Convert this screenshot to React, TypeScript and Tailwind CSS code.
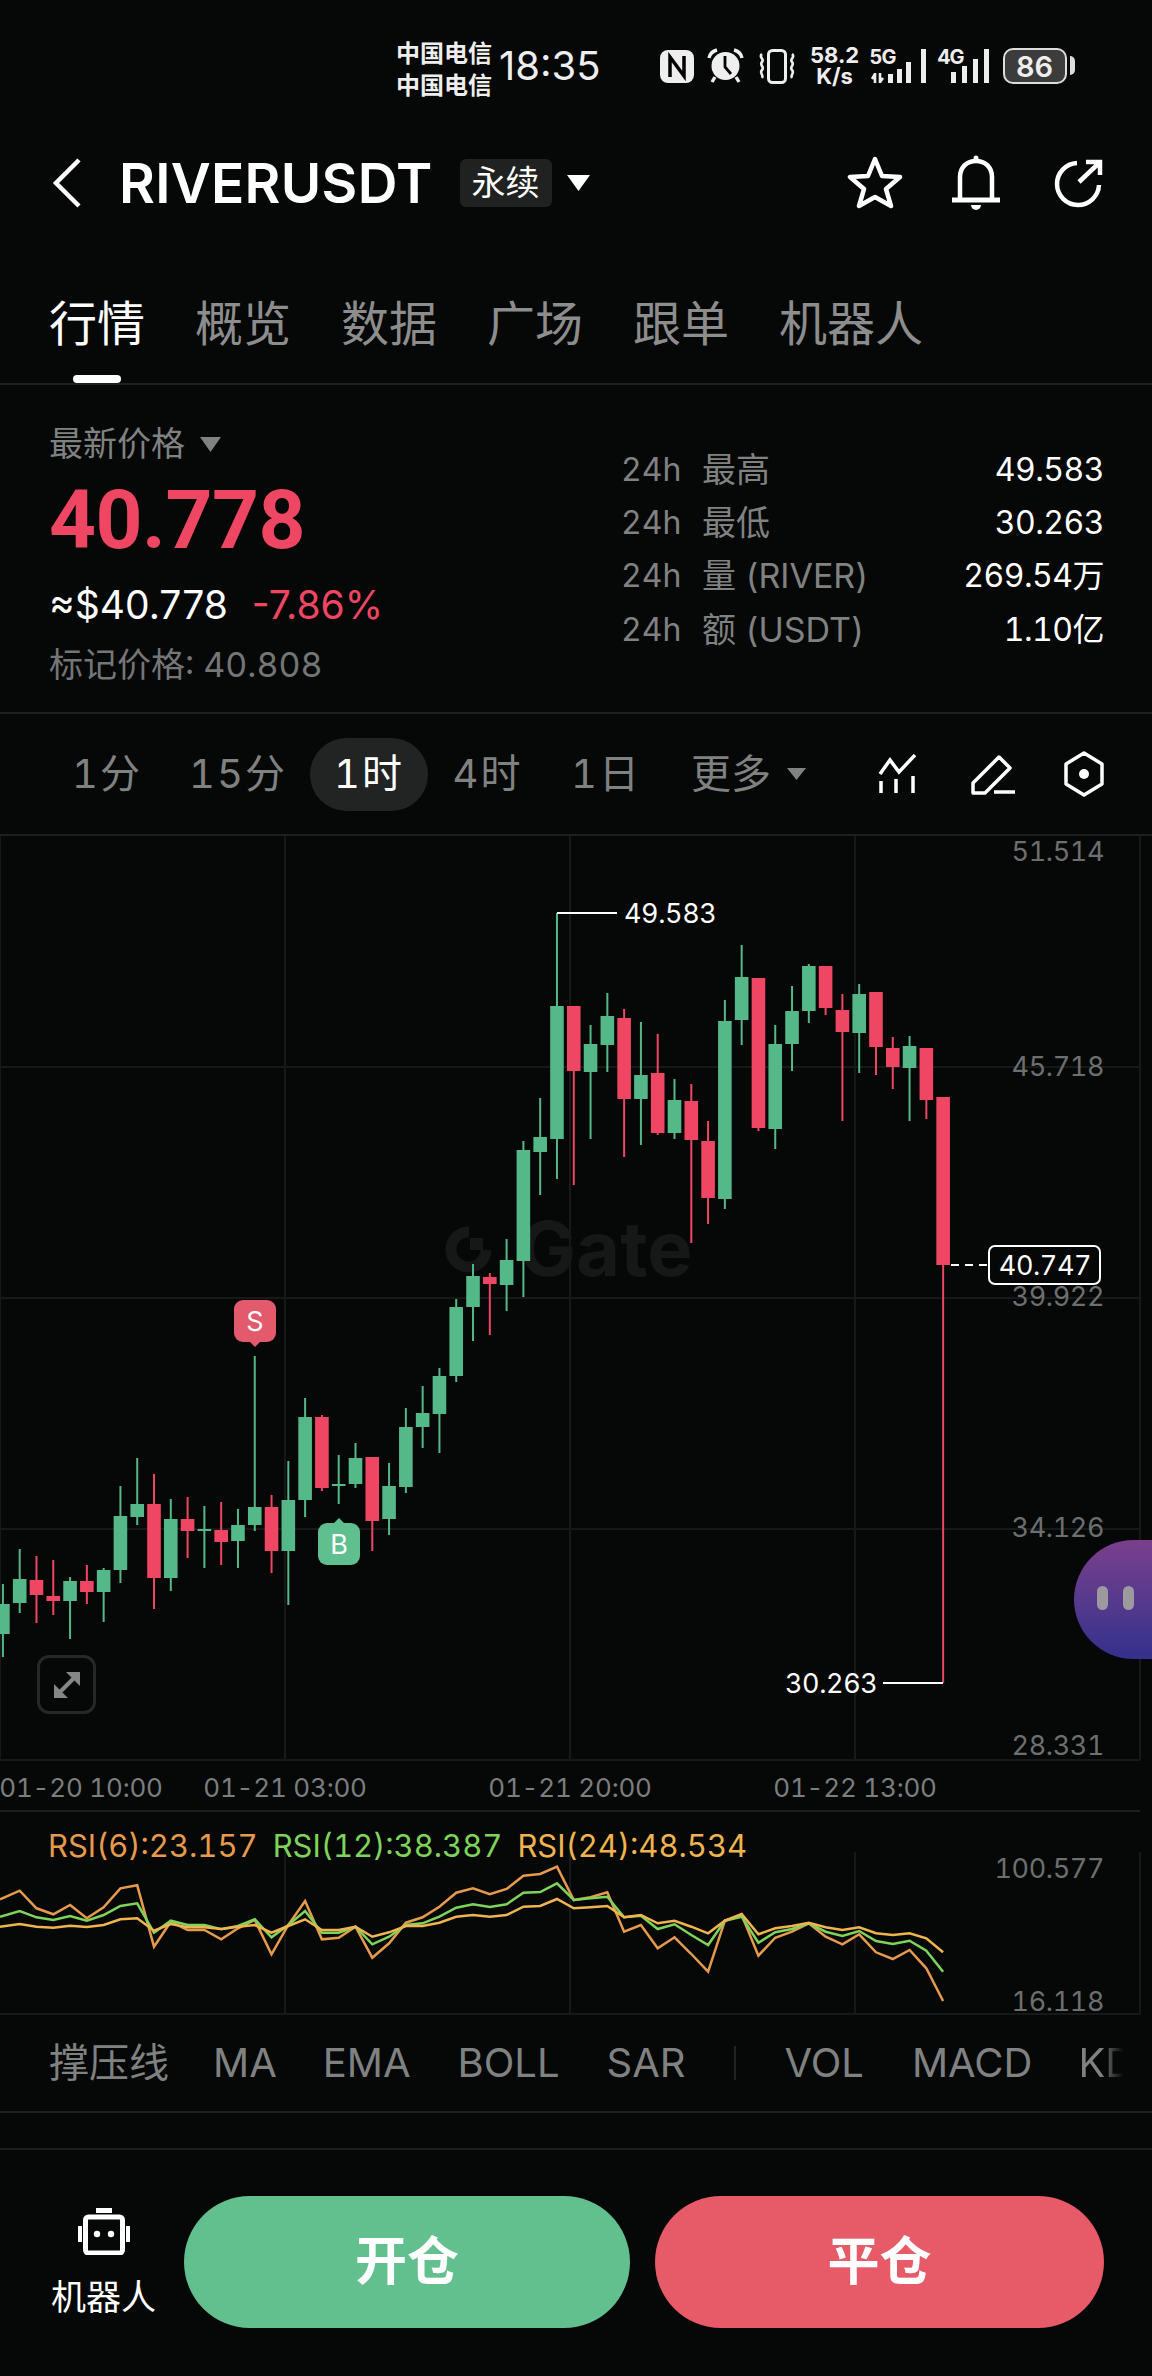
import React from 'react';

type Candle = [number, number, number, number, 'g' | 'r'];

const UP = '#55b888';
const DOWN = '#ee4663';

// wick top, wick bottom, body top, body bottom, direction
const candles: Candle[] = [
  [1584, 1657, 1604, 1634, 'g'], [1549, 1613, 1579, 1603, 'g'], [1556, 1623, 1580, 1595, 'r'],
  [1560, 1615, 1596, 1601, 'r'], [1577, 1639, 1581, 1601, 'g'], [1565, 1604, 1581, 1592, 'r'],
  [1568, 1622, 1570, 1592, 'g'], [1486, 1583, 1516, 1570, 'g'], [1458, 1525, 1504, 1517, 'g'],
  [1474, 1609, 1504, 1578, 'r'], [1499, 1591, 1519, 1578, 'g'], [1497, 1558, 1519, 1531, 'r'],
  [1506, 1568, 1529, 1531, 'g'], [1502, 1565, 1530, 1542, 'r'], [1509, 1568, 1525, 1541, 'g'],
  [1356, 1531, 1507, 1525, 'g'], [1495, 1573, 1507, 1551, 'r'], [1461, 1605, 1500, 1551, 'g'],
  [1398, 1517, 1417, 1500, 'g'], [1415, 1491, 1417, 1488, 'r'], [1455, 1504, 1484, 1486, 'g'],
  [1443, 1488, 1458, 1484, 'g'], [1457, 1551, 1457, 1521, 'r'], [1463, 1535, 1486, 1519, 'g'],
  [1408, 1493, 1427, 1487, 'g'], [1386, 1448, 1413, 1427, 'g'], [1368, 1453, 1376, 1414, 'g'],
  [1299, 1382, 1307, 1376, 'g'], [1264, 1341, 1276, 1307, 'g'], [1273, 1335, 1277, 1284, 'r'],
  [1239, 1311, 1260, 1285, 'g'], [1141, 1297, 1150, 1261, 'g'], [1098, 1195, 1137, 1152, 'g'],
  [913, 1179, 1006, 1139, 'g'], [1006, 1185, 1006, 1071, 'r'], [1025, 1139, 1044, 1072, 'g'],
  [993, 1072, 1016, 1045, 'g'], [1009, 1157, 1018, 1099, 'r'], [1022, 1145, 1075, 1099, 'g'],
  [1034, 1135, 1073, 1133, 'r'], [1079, 1139, 1100, 1133, 'g'], [1084, 1243, 1101, 1140, 'r'],
  [1121, 1224, 1141, 1198, 'r'], [1000, 1209, 1021, 1199, 'g'], [945, 1045, 977, 1020, 'g'],
  [978, 1131, 978, 1128, 'r'], [1025, 1149, 1044, 1129, 'g'], [986, 1071, 1011, 1044, 'g'],
  [964, 1023, 966, 1011, 'g'], [966, 1015, 966, 1008, 'r'], [994, 1121, 1010, 1032, 'r'],
  [984, 1073, 994, 1033, 'g'], [992, 1075, 992, 1047, 'r'], [1037, 1089, 1048, 1067, 'r'],
  [1036, 1121, 1046, 1068, 'g'], [1048, 1119, 1048, 1100, 'r'], [1097, 1683, 1097, 1265, 'r'],
];

const candleX = (i: number) => 2.9 + i * 16.79;

// RSI readings in plot units, one per candle
const rsi6 = [298, 272, 325, 343, 315, 355, 322, 265, 256, 440, 365, 390, 390, 418, 385, 360, 463, 375, 303, 418, 413, 380, 473, 430, 368, 352, 320, 278, 265, 283, 267, 227, 222, 200, 300, 292, 277, 395, 375, 445, 412, 462, 515, 362, 345, 467, 413, 395, 370, 410, 433, 403, 457, 477, 450, 505, 603];
const rsi12 = [350, 333, 352, 360, 348, 362, 345, 318, 310, 398, 362, 375, 375, 388, 378, 358, 412, 375, 333, 398, 398, 380, 433, 410, 375, 370, 350, 323, 313, 321, 313, 278, 276, 250, 300, 295, 290, 352, 347, 387, 373, 405, 435, 362, 350, 428, 397, 387, 370, 395, 408, 393, 423, 432, 422, 452, 515];
const rsi24 = [380, 372, 380, 383, 377, 381, 375, 358, 355, 392, 372, 382, 382, 387, 380, 375, 398, 378, 358, 390, 390, 380, 410, 397, 378, 378, 368, 350, 345, 350, 345, 320, 318, 297, 325, 322, 318, 352, 345, 370, 362, 380, 400, 362, 342, 403, 385, 378, 368, 382, 390, 382, 400, 405, 400, 415, 457];

const rsiPoints = (values: number[]) =>
  values.map((v, i) => `${i === 0 ? 0 : candleX(i).toFixed(1)},${(1800 + v / 3).toFixed(1)}`).join(' ');

const Triangle: React.FC<{ className: string; color: string }> = ({ className, color }) => (
  <svg className={className} viewBox="0 0 20 16" preserveAspectRatio="none">
    <polygon points="0,0 20,0 10,16" fill={color} />
  </svg>
);

const StatusBar = () => (
  <div className="h-[130px] flex items-start pl-[396px] pt-[38px] text-[#eeeeee]">
    <div className="w-[96px] text-[24px] font-bold leading-[32px]">
      <div>中国电信</div>
      <div>中国电信</div>
    </div>
    <div className="ml-[7px] mt-[6px] text-[40px] leading-[44px] font-normal normal-nums">18:35</div>
    <svg className="ml-[59px] mt-[12px]" width="34" height="33" viewBox="0 0 34 33">
      <rect x="0" y="0" width="34" height="33" rx="8" fill="#eeeeee" />
      <path d="M10 27V7l14 19V6" stroke="#000" strokeWidth="3.5" fill="none" />
    </svg>
    <svg className="ml-[13px] mt-[10px]" width="37" height="35" viewBox="0 0 37 35">
      <circle cx="18.5" cy="18" r="14" fill="#eeeeee" />
      <path d="M18 8v11l6 7" stroke="#000" strokeWidth="2.8" fill="none" />
      <path d="M2 10c1-5 4-7 8-8M35 10c-1-5-4-7-8-8M8 29l-3 5M29 29l3 5" stroke="#eeeeee" strokeWidth="3.4" fill="none" />
    </svg>
    <svg className="ml-[13px] mt-[11px]" width="40" height="35" viewBox="0 0 40 35">
      <rect x="11.5" y="1.5" width="17" height="32" rx="4" stroke="#eeeeee" strokeWidth="3" fill="none" />
      <path d="M5 5c-4 3 3 5 0 8s3 5 0 8 2 5 0 8M35 5c4 3-3 5 0 8s-3 5 0 8-2 5 0 8" stroke="#eeeeee" strokeWidth="2.6" fill="none" />
    </svg>
    <div className="ml-[12px] mt-[7px] w-[52px] text-center text-[22px] font-bold leading-[21px] normal-nums">
      <div>58.2</div>
      <div>K/s</div>
    </div>
    <div className="relative ml-[9px] mt-[10px] w-[56px] h-[36px]">
      <span className="absolute left-0 -top-[1px] text-[20px] font-bold leading-[20px] tracking-[-1px]">5G</span>
      <svg className="absolute left-0 top-0" width="56" height="36" viewBox="0 0 56 36">
        <path d="M5 25v10M2 31l3-5M10 25v10M13 30l-3 4" stroke="#eeeeee" strokeWidth="2.6" fill="none" />
        <rect x="18" y="26" width="5" height="9" fill="#eeeeee" />
        <rect x="27" y="21" width="5" height="14" fill="#eeeeee" />
        <rect x="36" y="14" width="5" height="21" fill="#eeeeee" />
        <rect x="51" y="1" width="5" height="34" fill="#eeeeee" />
      </svg>
    </div>
    <div className="relative ml-[12px] mt-[10px] w-[52px] h-[36px]">
      <span className="absolute left-0 -top-[1px] text-[20px] font-bold leading-[20px] tracking-[-1px]">4G</span>
      <svg className="absolute left-0 top-0" width="52" height="36" viewBox="0 0 52 36">
        <rect x="13" y="24" width="5" height="11" fill="#eeeeee" />
        <rect x="24" y="18" width="5" height="17" fill="#eeeeee" />
        <rect x="35" y="11" width="5" height="24" fill="#eeeeee" />
        <rect x="46" y="1" width="5" height="34" fill="#eeeeee" />
      </svg>
    </div>
    <div className="ml-[13px] mt-[10px] w-[64px] h-[36px] rounded-[10px] border-2 border-[#dddddd] bg-[#3c3c3c] flex items-center justify-center text-[29px] font-semibold leading-none normal-nums">
      86
    </div>
    <div className="ml-[3px] mt-[18px] w-[5px] h-[19px] rounded-r-full bg-[#dddddd]" />
  </div>
);

const Header = () => (
  <div className="h-[106px] flex items-center text-white">
    <svg className="ml-[52px]" width="30" height="50" viewBox="0 0 30 50">
      <path d="M27 2 4 25l23 23" stroke="#fff" strokeWidth="4.5" fill="none" />
    </svg>
    <h1 className="ml-[37px] text-[55px] font-semibold leading-none tracking-[0.3px]">RIVERUSDT</h1>
    <span className="ml-[27px] w-[92px] h-[48px] rounded-[6px] bg-[#202121] flex items-center justify-center text-[34px] leading-none">永续</span>
    <Triangle className="ml-[15px] w-[23px] h-[16px]" color="#ffffff" />
    <div className="flex-1" />
    <svg width="56" height="54" viewBox="0 0 56 54">
      <polygon points="28,3 35,20 53,21 39,33 44,50 28,41 12,50 17,33 3,21 21,20" stroke="#fff" strokeWidth="4.5" strokeLinejoin="round" fill="none" />
    </svg>
    <svg className="ml-[48px]" width="50" height="56" viewBox="0 0 50 56">
      <path d="M9 44V22C9 12 16 6 25 6s16 6 16 16v22" stroke="#fff" strokeWidth="4.5" fill="none" />
      <path d="M1 45h48" stroke="#fff" strokeWidth="5" />
      <circle cx="25" cy="3" r="2.5" fill="#fff" />
      <path d="M20 50h10a5 5 0 0 1-10 0z" fill="#fff" />
    </svg>
    <svg className="ml-[52px] mr-[49px]" width="50" height="50" viewBox="0 0 50 50">
      <path d="M24 5A21 21 0 1 0 46 27" stroke="#fff" strokeWidth="4.5" fill="none" />
      <path d="M26 24 46 5M33 4h14v13" stroke="#fff" strokeWidth="4.5" fill="none" />
    </svg>
  </div>
);

const Tabs = () => {
  const items = ['行情', '概览', '数据', '广场', '跟单', '机器人'];
  return (
    <div className="relative h-[149px] border-b-2 border-[#1e1f1f] pl-[49px] pt-[60px] flex items-start gap-[50px] text-[48px] leading-[56px] text-[#8d8d8d]">
      {items.map((name, i) => (
        <span key={name} className={i === 0 ? 'text-white' : ''}>{name}</span>
      ))}
      <span className="absolute left-[73px] bottom-0 w-[48px] h-[8px] rounded-[4px] bg-white" />
    </div>
  );
};

const StatRow: React.FC<{ label: string; value: string }> = ({ label, value }) => (
  <div className="h-[53.4px] flex items-center text-[34px] leading-none">
    <span className="w-[81px] text-[32px] text-[#808282]">24h</span>
    <span className="text-[#808282]">{label}</span>
    <span className="ml-auto text-[32px] tracking-[-0.5px] text-white">{value}</span>
  </div>
);

const PriceSummary = () => (
  <div className="h-[329px] border-b-2 border-[#1e1f1f] flex">
    <div className="pl-[49px] w-[621px]">
      <div className="mt-[39px] h-[40px] flex items-center text-[34px] leading-none text-[#808282]">
        最新价格
        <Triangle className="ml-[15px] w-[21px] h-[15px]" color="#808282" />
      </div>
      <div className="mt-[16px] h-[80px] flex items-center font-['Roboto',sans-serif] text-[82px] font-bold leading-none tracking-[-0.5px] text-[#ee4663]">40.778</div>
      <div className="mt-[22px] h-[44px] flex items-center text-[39px] leading-none normal-nums">
        <span className="text-white">≈$40.778</span>
        <span className="ml-[24px] text-[#ee4663]">-7.86%</span>
      </div>
      <div className="mt-[19px] h-[40px] flex items-center text-[34px] leading-none text-[#747676]">标记价格: 40.808</div>
    </div>
    <div className="w-[483px] pt-[58px]">
      <StatRow label="最高" value="49.583" />
      <StatRow label="最低" value="30.263" />
      <StatRow label="量 (RIVER)" value="269.54万" />
      <StatRow label="额 (USDT)" value="1.10亿" />
    </div>
  </div>
);

const TimeframeBar = () => {
  const frames = [
    { name: '1分', width: 'w-[118px]' },
    { name: '15分', width: 'w-[144px]' },
    { name: '1时', width: 'w-[118px]' },
    { name: '4时', width: 'w-[119px]' },
    { name: '1日', width: 'w-[118px]' },
  ];
  return (
    <div className="h-[122px] border-b-2 border-[#1e1f1f] flex items-center pl-[48px] text-[40px] leading-none tracking-[2px] text-[#808282]">
      {frames.map(f => (
        <span
          key={f.name}
          className={`${f.width} h-[73px] flex items-center justify-center rounded-full ${f.name === '1时' ? 'bg-[#222323] text-white' : ''}`}
        >
          {f.name}
        </span>
      ))}
      <span className="ml-[26px] tracking-normal">更多</span>
      <Triangle className="ml-[16px] w-[19px] h-[12px]" color="#808282" />
      <svg className="ml-[72px]" width="40" height="40" viewBox="0 0 40 40">
        <path d="M2 20 12 6l9 12L37 1" stroke="#fff" strokeWidth="3.5" fill="none" />
        <path d="M3 27v12M18 25v14M35 22v17" stroke="#fff" strokeWidth="3.5" />
      </svg>
      <svg className="ml-[52px]" width="46" height="42" viewBox="0 0 46 42">
        <path d="M3 40V30L29 4l11 11-25 25z" stroke="#fff" strokeWidth="3.5" strokeLinejoin="round" fill="none" />
        <path d="M24 39h21" stroke="#fff" strokeWidth="3.5" />
      </svg>
      <svg className="ml-[47px]" width="42" height="46" viewBox="0 0 42 46">
        <polygon points="21,2 39,13 39,33 21,44 3,33 3,13" stroke="#fff" strokeWidth="3.5" strokeLinejoin="round" fill="none" />
        <circle cx="21" cy="23" r="5" fill="#fff" />
      </svg>
    </div>
  );
};

const GRID = '#171919';
const AXIS = '#6d6f6f';

const CandleChart = () => (
  <div className="relative h-[974px]">
    <svg className="block" width="1152" height="974" viewBox="0 836 1152 974">
      {[0, 285, 570, 855, 1140].map(x => (
        <line key={x} x1={x} x2={x} y1={836} y2={1760} stroke={GRID} strokeWidth="2" />
      ))}
      {[1067, 1298, 1529, 1760].map(y => (
        <line key={y} x1={0} x2={1140} y1={y} y2={y} stroke={GRID} strokeWidth="2" />
      ))}

      {/* exchange watermark */}
      <path d="M469 1232A17.5 17.5 0 1 0 486 1250" stroke="#161717" strokeWidth="11" fill="none" />
      <rect x="470" y="1238" width="13" height="12" fill="#161717" />
      <text x="519" y="1276" fontSize="76" fontWeight="700" fill="#161717">Gate</text>

      {candles.map(([wt, wb, bt, bb, dir], i) => {
        const fill = dir === 'g' ? UP : DOWN;
        const x = candleX(i);
        return (
          <g key={i} fill={fill}>
            <rect x={x - 1} y={wt} width="2" height={wb - wt} />
            <rect x={x - 6.8} y={bt} width="13.6" height={bb - bt} />
          </g>
        );
      })}

      {/* high / low callouts */}
      <path d="M557 913H617" stroke="#fff" strokeWidth="2" />
      <text x="624" y="923" fontSize="27" letterSpacing="-0.4" fill="#fff">49.583</text>
      <path d="M883 1683H943" stroke="#fff" strokeWidth="2" />
      <text x="785" y="1693" fontSize="27" letterSpacing="-0.4" fill="#fff">30.263</text>

      <g fontSize="27" letterSpacing="-0.4" fill={AXIS} textAnchor="end">
        <text x="1104" y="861">51.514</text>
        <text x="1104" y="1076">45.718</text>
        <text x="1104" y="1306">39.922</text>
        <text x="1104" y="1537">34.126</text>
        <text x="1104" y="1755">28.331</text>
      </g>
      <g fontSize="26" letterSpacing="-0.2" fill="#7c7e7e" textAnchor="middle">
        <text x="81" y="1797">01-20 10:00</text>
        <text x="285" y="1797">01-21 03:00</text>
        <text x="570" y="1797">01-21 20:00</text>
        <text x="855" y="1797">01-22 13:00</text>
      </g>

      {/* last price tag */}
      <path d="M951 1265H988" stroke="#fff" strokeWidth="2" strokeDasharray="8 6" />
      <rect x="989" y="1246" width="111" height="38" rx="6" fill="#060707" stroke="#fff" strokeWidth="2" />
      <text x="1045" y="1275" fontSize="27" letterSpacing="-0.4" fill="#fff" textAnchor="middle">40.747</text>
    </svg>

    <div className="absolute left-[234px] top-[464px] w-[42px] h-[42px] rounded-[9px] bg-[#e25a6c] flex items-center justify-center text-[27px] leading-none text-white">
      S
      <span className="absolute left-[16px] -bottom-[5px] w-0 h-0 border-x-[5px] border-x-transparent border-t-[5px] border-t-[#e25a6c]" />
    </div>
    <div className="absolute left-[318px] top-[687px] w-[42px] h-[42px] rounded-[9px] bg-[#5fbf8e] flex items-center justify-center text-[27px] leading-none text-white">
      B
      <span className="absolute left-[16px] -top-[5px] w-0 h-0 border-x-[5px] border-x-transparent border-b-[5px] border-b-[#5fbf8e]" />
    </div>

    <div className="absolute left-[37px] top-[819px] w-[59px] h-[59px] rounded-[12px] border-[3px] border-[#262727] flex items-center justify-center">
      <svg width="30" height="30" viewBox="0 0 30 30">
        <path d="M14 2h14v14z M16 28H2V14z" fill="#858787" />
        <path d="M22 8 8 22" stroke="#858787" strokeWidth="4" />
      </svg>
    </div>

    <div className="absolute right-0 top-[704px] w-[78px] h-[119px] rounded-l-[60px] bg-gradient-to-b from-[#7a3f8c] to-[#33308c]">
      <span className="absolute left-[23px] top-[46px] w-[11px] h-[24px] rounded-full bg-[#9c9a9e]" />
      <span className="absolute left-[49px] top-[46px] w-[11px] h-[24px] rounded-full bg-[#9c9a9e]" />
    </div>
  </div>
);

const RsiPanel = () => (
  <div className="relative h-[205px]">
    <svg className="block" width="1152" height="205" viewBox="0 1810 1152 205">
      <line x1={0} x2={1140} y1={1811} y2={1811} stroke="#1e1f1f" strokeWidth="2" />
      <line x1={0} x2={1140} y1={2014} y2={2014} stroke={GRID} strokeWidth="2" />
      {[285, 570, 855, 1140].map(x => (
        <line key={x} x1={x} x2={x} y1={1852} y2={2014} stroke={GRID} strokeWidth="2" />
      ))}
      <polyline points={rsiPoints(rsi6)} stroke="#e69a4c" strokeWidth="2.5" fill="none" />
      <polyline points={rsiPoints(rsi12)} stroke="#7dd45a" strokeWidth="2.5" fill="none" />
      <polyline points={rsiPoints(rsi24)} stroke="#f0b44e" strokeWidth="2.5" fill="none" />
      <g fontSize="27" letterSpacing="-0.4" fill={AXIS} textAnchor="end">
        <text x="1104" y="1878">100.577</text>
        <text x="1104" y="2011">16.118</text>
      </g>
    </svg>
    <div className="absolute left-[48px] top-[18px] flex gap-[15px] text-[31px] leading-[36px]">
      <span className="text-[#e69a4c]">RSI(6):23.157</span>
      <span className="text-[#7dd45a]">RSI(12):38.387</span>
      <span className="text-[#f0b44e]">RSI(24):48.534</span>
    </div>
  </div>
);

const IndicatorBar = () => (
  <div className="relative h-[98px] border-b-2 border-[#1e1f1f] flex items-center pl-[49px] text-[40px] leading-none text-[#808282] overflow-hidden">
    <span>撑压线</span>
    <span className="ml-[44px]">MA</span>
    <span className="ml-[46px]">EMA</span>
    <span className="ml-[47px]">BOLL</span>
    <span className="ml-[47px]">SAR</span>
    <span className="ml-[48px] w-[2px] h-[34px] bg-[#222323]" />
    <span className="ml-[49px]">VOL</span>
    <span className="ml-[48px]">MACD</span>
    <span className="ml-[46px] w-[46px] overflow-hidden shrink-0 bg-gradient-to-r from-[#808282] from-50% to-[#060707] bg-clip-text text-transparent">KDJ</span>
  </div>
);

const Footer = () => (
  <div className="border-t-2 border-[#1e1f1f] mt-[35px] flex items-start pt-[46px]">
    <div className="ml-[51px] w-[105px] flex flex-col items-center text-white">
      <svg className="mt-[12px]" width="52" height="47" viewBox="0 0 52 47">
        <rect x="18" y="0" width="16" height="5" fill="#fff" />
        <rect x="7.5" y="9" width="37" height="36" rx="3" stroke="#fff" strokeWidth="5" fill="none" />
        <rect x="0" y="18" width="4" height="16" fill="#fff" />
        <rect x="48" y="18" width="4" height="16" fill="#fff" />
        <circle cx="19" cy="26" r="3.2" fill="#fff" />
        <circle cx="33" cy="26" r="3.2" fill="#fff" />
      </svg>
      <span className="mt-[24px] text-[35px] leading-[36px] whitespace-nowrap">机器人</span>
    </div>
    <button className="ml-[28px] w-[446px] h-[132px] rounded-full bg-[#62bf8e] text-white text-[52px] font-bold leading-none">开仓</button>
    <button className="ml-[25px] w-[449px] h-[132px] rounded-full bg-[#e75a68] text-white text-[52px] font-bold leading-none">平仓</button>
  </div>
);

export default function App() {
  return (
    <div className="relative w-[1152px] h-[2376px] overflow-hidden bg-[#060707] tabular-nums font-['Inter','Noto_Sans_CJK_SC',sans-serif]">
      <StatusBar />
      <Header />
      <Tabs />
      <PriceSummary />
      <TimeframeBar />
      <CandleChart />
      <RsiPanel />
      <IndicatorBar />
      <Footer />
    </div>
  );
}
